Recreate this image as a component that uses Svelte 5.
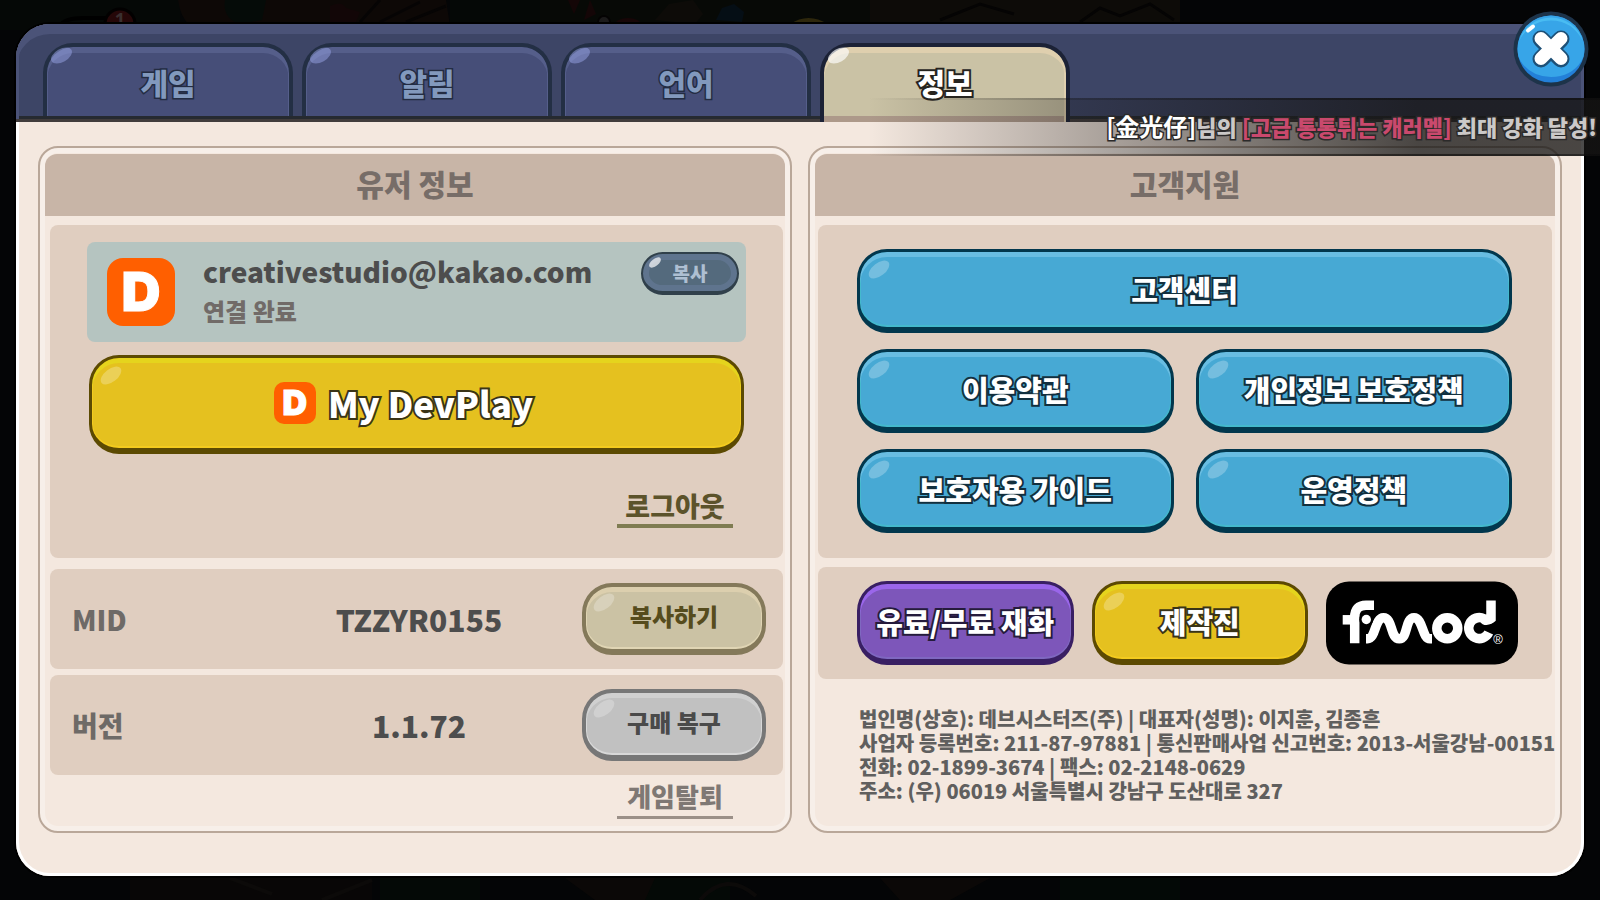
<script>
  const tabs = ['게임', '알림', '언어', '정보'];
  let active = $state('정보');

  const company = [
    '법인명(상호): 데브시스터즈(주) | 대표자(성명): 이지훈, 김종흔',
    '사업자 등록번호: 211-87-97881 | 통신판매사업 신고번호: 2013-서울강남-00151',
    '전화: 02-1899-3674 | 팩스: 02-2148-0629',
    '주소: (우) 06019 서울특별시 강남구 도산대로 327'
  ];
</script>

<div class="screen">
  <svg class="scene" viewBox="0 0 1600 900" preserveAspectRatio="xMidYMid slice" aria-hidden="true">
    <rect width="1600" height="900" fill="#040506" />
    <g opacity="0.6">
      <path d="M0 0H180V30H0zM450 0h90v30h-90z" fill="#060a07" />
      <path d="M178 0Q180 16 190 26H450L446 0z" fill="#130b07" />
      <path d="M225 0Q222 18 240 24L262 20 266 0z" fill="#07100a" />
      <path d="M330 6q12-6 16 2l14 4-4 10h-26z" fill="#1c0808" />
      <path d="M380 0l-20 22M420 2l-40 20M446 6l-40 16" stroke="#080403" stroke-width="3" />
      <path d="M540 0h330v26H540z" fill="#0a0d07" />
      <path d="M568 0l6 14 6-14zM590 0l-6 20 12-6z" fill="#200708" />
      <path d="M716 20l6-12 12-4 10 8-2 10z" fill="#071420" />
      <path d="M655 20l14-16 24-4 10 14-8 10zM870 0h310v24H870z" fill="#14100a" />
      <path d="M1080 22l20-14 20 8 30-12 24 16M940 20l40-16 34 10" stroke="#060403" stroke-width="3" fill="none" />
      <circle cx="604" cy="22" r="6" fill="#2b2828" stroke="#050202" stroke-width="2" />
      <ellipse cx="628" cy="25" rx="13" ry="7" fill="#240708" />
      <path d="M790 24q18-12 38 0z" fill="#4a3f10" />
      <path d="M130 880L210 876 260 876 372 880V900H130z" fill="#0b0806" />
      <path d="M380 878h100v22H380zM630 878h100v22H630zM1060 878h120v22h-120z" fill="#040c06" />
      <path d="M565 878l30 22h50l10-22zM880 878h110l-40 22h-50z" fill="#110b08" />
      <path d="M700 900q26-30 56-4M230 878l42 16M372 880l-50 20" stroke="#120e0c" stroke-width="4" fill="none" />
    </g>
    <path d="M60 26Q64 18 84 18H112" fill="none" stroke="#000" stroke-width="4" />
    <circle cx="120" cy="24" r="15" fill="#250708" stroke="#020000" stroke-width="3" />
    <text x="120" y="26" class="count">1</text>
  </svg>

  <main class="dialog">
    <header>
      <div class="tabs" role="tablist">
        {#each tabs as tab}
          <button
            class="tab"
            class:on={tab === active}
            role="tab"
            aria-selected={tab === active}
            onclick={() => (active = tab)}>{tab}</button>
        {/each}
      </div>
    </header>

    <div class="body">
      <section class="panel user">
        <h2>유저 정보</h2>
        <div class="box account">
          <div class="linked">
            <span class="mark" aria-hidden="true">D</span>
            <div class="who">
              <strong>creativestudio@kakao.com</strong>
              <span>연결 완료</span>
            </div>
            <button class="mini">복사</button>
          </div>
          <button class="pill yellow devplay">
            <span class="mark small" aria-hidden="true">D</span>My DevPlay
          </button>
          <a class="logout" href="#logout">로그아웃</a>
        </div>
        <div class="box row">
          <span class="label">MID</span>
          <span class="value">TZZYR0155</span>
          <button class="pill flat khaki">복사하기</button>
        </div>
        <div class="box row">
          <span class="label">버전</span>
          <span class="value">1.1.72</span>
          <button class="pill flat gray">구매 복구</button>
        </div>
        <a class="leave" href="#leave">게임탈퇴</a>
      </section>

      <section class="panel">
        <h2>고객지원</h2>
        <div class="box support">
          <button class="pill blue wide">고객센터</button>
          <button class="pill blue">이용약관</button>
          <button class="pill blue">개인정보 보호정책</button>
          <button class="pill blue">보호자용 가이드</button>
          <button class="pill blue">운영정책</button>
        </div>
        <div class="box extras">
          <button class="pill purple">유료/무료 재화</button>
          <button class="pill yellow">제작진</button>
          <svg class="fmod" viewBox="0 0 192 83" role="img" aria-label="fmod">
            <rect width="192" height="83" rx="23" />
            <g fill="none" stroke="#fff" stroke-width="9.500">
              <path d="M28.700 61.700V36Q28.700 23.700 40 23.700H48" />
              <path d="M16.700 38.300H32" />
              <path d="M40 57.300H41.500C50 57.300 48.500 36.300 57.500 36.300C67 36.300 64 57.300 73.300 57.300C82 57.300 79 36.300 88 36.300C97 36.300 96 57.300 104 57.300H106" />
              <circle cx="121.300" cy="46.700" r="10.500" />
              <path d="M162.800 51A10.500 10.500 0 1 1 158 37.200Q160 41 165 37V19" />
            </g>
            <circle cx="40.300" cy="38" r="7" />
            <circle cx="40.300" cy="38" r="4.700" fill="#fff" />
            <path d="M154 46.500L170 43" stroke="#000" stroke-width="3" />
            <text x="172" y="62" class="reg">®</text>
          </svg>
        </div>
        <address>
          {#each company as line}
            <div>{line}</div>
          {/each}
        </address>
      </section>
    </div>

    <button class="close" aria-label="닫기">
      <svg viewBox="0 0 76 76" aria-hidden="true">
        <circle cx="38" cy="38" r="37.500" fill="#1d3349" />
        <circle cx="38" cy="38" r="33.500" fill="#2380d8" />
        <path d="M4.500 38a33.500 33.500 0 0 1 67 0q0 7-3 12Q58 66 38 66T7.500 50q-3-5-3-12z" fill="#37a5e8" />
        <path d="M6 30a33.500 33.500 0 0 1 64 0Q59 9.500 38 9.500T6 30z" fill="#49bcf2" />
        <path d="M28 28L48 48M48 28L28 48" stroke="#1d5077" stroke-width="17" stroke-linecap="round" />
        <path d="M28 27.500L48 47.500M48 27.500L28 47.500" stroke="#fff" stroke-width="13" stroke-linecap="round" />
        <path d="M15 19.500L20 15.500" stroke="#fff" stroke-width="4" stroke-linecap="round" />
      </svg>
    </button>
  </main>

  <p class="ticker">
    <b class="name">[金光仔]</b>님의 <b class="item">[고급 통통튀는 캐러멜]</b> 최대 강화 달성!
  </p>
</div>

<style>
  :global(body) {
    margin: 0;
    background: #040506;
  }
  .screen {
    position: relative;
    box-sizing: border-box;
    min-height: 100vh;
    padding: 24px 16px;
    display: flex;
    overflow: hidden;
    font-family: 'Noto Sans CJK KR', 'Noto Sans', sans-serif;
    font-weight: 900;
    color: #4d4d4d;
  }
  .screen * {
    box-sizing: border-box;
  }
  button {
    font: inherit;
    margin: 0;
    padding: 0;
    cursor: pointer;
  }
  a {
    text-decoration: none;
  }
  .scene {
    position: absolute;
    inset: 0;
    width: 100%;
    height: 100%;
  }
  .count {
    font: 700 18px 'Noto Sans', sans-serif;
    fill: #3a3030;
    text-anchor: middle;
  }

  .dialog {
    position: relative;
    flex: 1;
    display: flex;
    flex-direction: column;
    border-radius: 34px;
    background: #f4e8df;
    box-shadow: 0 0 0 2px #000;
  }
  header {
    height: 98px;
    padding: 19px 27px 0;
    border-radius: 34px 34px 0 0;
    border-bottom: 3px solid #413c3c;
    background: #3d4566;
    box-shadow: inset 0 10px 0 #4b5378, inset 3px 0 0 #4b5378, inset -3px 0 0 #4b5378, inset 0 -3px 0 #262a30;
  }
  .tabs {
    display: flex;
    gap: 9px;
  }
  .tab {
    position: relative;
    width: 250px;
    height: 73px;
    border: 4px solid #232f44;
    border-bottom: 0;
    border-radius: 30px 30px 0 0;
    background: #464e78;
    box-shadow: inset 0 6px 0 #555e8a, inset 1px 0 0 #555e8a, inset -1px 0 0 #555e8a;
    color: #8299bd;
    font-size: 30px;
    line-height: 40px;
    -webkit-text-stroke: 3px #232c42;
    paint-order: stroke fill;
  }
  .tab.on {
    height: 79px;
    padding-bottom: 6px;
    border-color: #1c2236;
    background: #cac2a5;
    box-shadow: inset 0 6px 0 #dfcfae, inset -2px 0 0 #dfcfae, inset 0 -6px 0 #ad998a;
    color: #fff;
    -webkit-text-stroke: 4px #26241f;
  }
  .tab::before,
  .pill::before,
  .mini::before {
    content: '';
    position: absolute;
    width: 24px;
    height: 13px;
    border-radius: 50%;
    background: #fff;
    opacity: 0.25;
    transform: rotate(-38deg);
  }
  .tab::before {
    left: 3px;
    top: 2px;
    width: 23px;
    background: #97a4e6;
    opacity: 0.5;
    transform: rotate(-30deg);
  }
  .tab.on::before {
    background: #fff;
    opacity: 0.65;
  }

  .body {
    flex: 1;
    display: grid;
    grid-template-columns: 1fr 1fr;
    gap: 16px;
    padding: 24px 19px 40px;
    border: 3px solid #fff;
    border-top: 0;
    border-radius: 0 0 34px 34px;
  }
  .panel {
    display: flex;
    flex-direction: column;
    min-width: 0;
    padding: 6px 5px;
    border: 2px solid #b9a799;
    border-radius: 20px;
    box-shadow: inset 0 0 0 5px #f7efe9;
  }
  h2 {
    height: 62px;
    margin: 0 0 9px;
    border-radius: 12px 12px 0 0;
    background: #c8b5a7;
    color: #776d68;
    font-size: 30px;
    font-weight: 900;
    line-height: 58px;
    text-align: center;
  }
  .box {
    margin: 0 3px;
    border-radius: 8px;
    background: #e0cec0;
  }
  .user .box {
    margin: 0 2px 0 5px;
  }
  .user .account {
    display: flex;
    flex-direction: column;
    gap: 13px;
    padding: 17px 37px 30px;
    margin-bottom: 11px;
  }
  .linked {
    display: flex;
    align-items: center;
    height: 100px;
    padding: 0 7px 0 20px;
    border-radius: 8px;
    background: #b5c4c0;
  }
  .mark {
    width: 68px;
    height: 68px;
    border-radius: 16px;
    background: #ff5f00;
    color: #fff;
    font-family: Inter, sans-serif;
    font-size: 54px;
    font-weight: 900;
    line-height: 68px;
    text-align: center;
    -webkit-text-stroke: 1px #fff;
    text-shadow: none;
  }
  .mark.small {
    width: 42px;
    height: 42px;
    border-radius: 10px;
    font-size: 34px;
    line-height: 42px;
  }
  .who {
    flex: 1;
    display: flex;
    flex-direction: column;
    margin-left: 28px;
    padding-bottom: 2px;
    line-height: 40px;
  }
  .who strong {
    font-size: 28px;
    font-weight: 900;
  }
  .who span {
    font-size: 24px;
    color: #716b68;
  }
  .mini {
    position: relative;
    align-self: flex-start;
    width: 98px;
    height: 43px;
    margin-top: 10px;
    border: 2px solid #30404b;
    border-bottom-width: 4px;
    border-radius: 22px;
    background: #546a7d;
    box-shadow: inset 0 0 0 6px #5f748e;
    color: #aebfd2;
    font-size: 19px;
    line-height: 37px;
  }
  .mini::before {
    left: 5px;
    top: 5px;
    width: 14px;
    height: 7px;
    opacity: 0.7;
  }

  .pill {
    position: relative;
    height: 84px;
    padding-bottom: 2px;
    border: 3px solid var(--edge);
    border-bottom-width: 6px;
    border-radius: 30px;
    background: var(--fill);
    box-shadow: inset 0 5px 0 var(--top), inset 0 0 0 1px var(--rim), inset 0 -2px 0 var(--rim);
    color: #fff;
    font-size: 29px;
    line-height: 40px;
    -webkit-text-stroke: 4px var(--ink);
    paint-order: stroke fill;
    text-shadow: 0 1px 0 var(--ink);
  }
  .pill::before {
    left: 7px;
    top: 11px;
  }
  .blue {
    --edge: #02374d;
    --fill: #47a9d4;
    --top: #69bde2;
    --rim: #44b9cd;
    --ink: #12303f;
  }
  .yellow {
    --edge: #5c4a02;
    --fill: #e5c11f;
    --top: #e5d41d;
    --rim: #f3cb1f;
    --ink: #3a3417;
  }
  .purple {
    --edge: #391f63;
    --fill: #7d56ba;
    --top: #9a66ea;
    --rim: #7f68c0;
    --ink: #251b3c;
  }
  .purple::before {
    display: none;
  }
  .khaki {
    --edge: #84795a;
    --fill: #cbc2a4;
    --top: #dccfae;
    --rim: #e0d5b4;
    color: #564c1d;
  }
  .gray {
    --edge: #777;
    --fill: #c1c1c1;
    --top: #d0d0d0;
    --rim: #d8d8d8;
    color: #4a4a4a;
  }
  .flat {
    width: 184px;
    height: 72px;
    padding-bottom: 4px;
    border-width: 4px;
    border-bottom-width: 6px;
    font-size: 24px;
    -webkit-text-stroke: 0;
    text-shadow: none;
  }
  .flat::before {
    left: 6px;
    top: 9px;
  }
  .devplay {
    display: flex;
    align-items: center;
    justify-content: center;
    gap: 12px;
    height: 99px;
    margin: 0 2px;
    padding: 0 26px 0 0;
    font-size: 35px;
  }
  .logout,
  .leave {
    align-self: flex-end;
    width: 116px;
    text-align: center;
  }
  .logout {
    height: 40px;
    margin: 21px 13px 0 0;
    border-bottom: 4px solid #7f7c52;
    color: #5c532b;
    font-size: 27px;
    line-height: 36px;
  }
  .leave {
    height: 43px;
    margin: 1px 52px 0 0;
    border-bottom: 3px solid #9b9088;
    color: #7f7874;
    font-size: 26px;
    line-height: 40px;
  }
  .user .row {
    display: grid;
    grid-template-columns: 1fr auto 1fr;
    align-items: center;
    height: 100px;
    padding: 0 17px 0 22px;
    font-size: 28px;
  }
  .user .row + .row {
    margin-top: 6px;
  }
  .row .label {
    color: #6e6a67;
  }
  .row .value {
    font-size: 30px;
  }
  .row .pill {
    justify-self: end;
  }

  .support {
    display: grid;
    grid-template-columns: 1fr 1fr;
    gap: 16px 22px;
    padding: 24px 40px 25px 39px;
    margin-bottom: 9px;
  }
  .wide {
    grid-column: 1 / -1;
  }
  .extras {
    display: flex;
    gap: 18px;
    padding: 14px 34px 14px 39px;
  }
  .extras .pill {
    flex: 1;
  }
  .fmod {
    width: 192px;
    height: 84px;
  }
  .reg {
    font: 400 13px 'Liberation Sans', sans-serif;
    fill: #fff;
    text-anchor: middle;
  }
  address {
    margin: 28px 0 0 44px;
    color: #605f5e;
    font-size: 20px;
    font-style: normal;
    line-height: 24px;
    white-space: nowrap;
  }

  .close {
    position: absolute;
    top: -13px;
    right: -5px;
    width: 76px;
    height: 76px;
    border: 0;
    border-radius: 50%;
    background: none;
  }
  .close svg {
    display: block;
  }

  .ticker {
    position: absolute;
    top: 98px;
    right: 0;
    width: 732px;
    height: 58px;
    margin: 0;
    padding-right: 3px;
    border: solid transparent;
    border-width: 2px 0;
    border-image: linear-gradient(90deg, transparent, rgba(10, 10, 10, 0.5) 75%) 1;
    background: linear-gradient(90deg, transparent, rgba(22, 21, 20, 0.77) 75%) border-box;
    color: #cbc9c8;
    font-size: 22px;
    line-height: 52px;
    text-align: right;
    white-space: nowrap;
    -webkit-text-stroke: 3px #2b2a2a;
    paint-order: stroke fill;
  }
  .ticker .name {
    color: #fff;
    font-size: 24px;
    font-weight: 700;
  }
  .ticker .item {
    color: #c9496d;
    font-weight: 900;
  }
</style>
